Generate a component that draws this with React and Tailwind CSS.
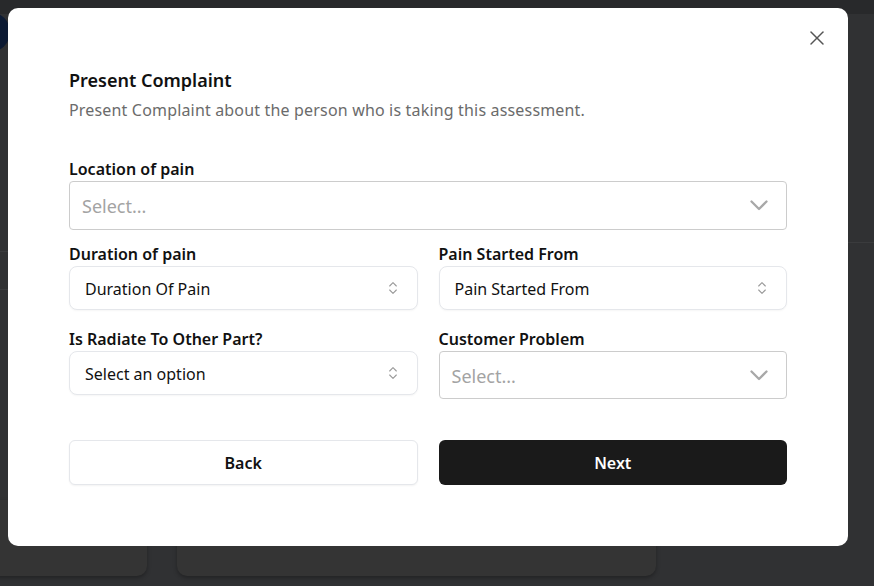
import React from "react";
import { X, ChevronsUpDown } from "lucide-react";

const font = { fontFamily: '"Noto Sans", "Open Sans", sans-serif' };

function Chevron() {
  return (
    <svg viewBox="0 0 18 11" width="18" height="11" fill="none">
      <polyline points="1.5,1.5 9,9 16.5,1.5" stroke="#a8a8a8" strokeWidth="2.3" strokeLinecap="round" strokeLinejoin="round" />
    </svg>
  );
}

function ReactSelect({ h }) {
  return (
    <div className={`flex items-center justify-between rounded-[4px] border border-[#cccccc] bg-white pl-[12px] pr-[18px] ${h}`}>
      <span className="pt-[2px] text-[18px] text-[#a3a3a3]">Select...</span>
      <Chevron />
    </div>
  );
}

function NativeSelect({ value }) {
  return (
    <div className="flex h-[44px] items-center justify-between rounded-[8px] border border-[#e5e7eb] bg-white pl-[15px] pr-[16px] shadow-[0_1px_2px_rgba(0,0,0,0.04)]">
      <span className="pt-[2px] text-[16px] text-[#111111]">{value}</span>
      <ChevronsUpDown size={16} strokeWidth={1.6} className="text-[#999999]" />
    </div>
  );
}

function Label({ children }) {
  return <div className="h-[24px] text-[16px] font-semibold leading-[24px] text-[#111111]">{children}</div>;
}

export default function App() {
  return (
    <div className="relative h-[586px] w-[874px] overflow-hidden bg-[#303133]" style={font}>
      {/* background page behind overlay */}
      <div className="absolute left-0 top-0 h-[14px] w-full bg-[#28292b]" />
      <div className="absolute left-[-34px] top-[12px] h-[40px] w-[44px] rounded-full bg-[#0c1a33]" />
      <div className="absolute left-0 top-[251px] h-px w-[10px] bg-[#3a3b3d]" />
      <div className="absolute left-0 top-[289px] h-px w-[10px] bg-[#3a3b3d]" />
      <div className="absolute right-0 top-[242px] h-px w-[30px] bg-[#3a3b3d]" />
      <div className="absolute left-[-10px] top-[500px] h-[76px] w-[157px] rounded-[10px] bg-[#343434] shadow-[0_2px_4px_rgba(0,0,0,0.3)]" />
      <div className="absolute left-[177px] top-[500px] h-[76px] w-[479px] rounded-[10px] bg-[#343434] shadow-[0_2px_4px_rgba(0,0,0,0.3)]" />

      {/* dialog */}
      <div className="absolute left-[8px] top-[8px] h-[538px] w-[840px] rounded-[10px] bg-white px-[61px] pt-[58px]">
        <button className="absolute left-[797px] top-[18px] block text-[#555555]">
          <X size={24} strokeWidth={1.5} />
        </button>

        <div className="text-[18px] font-semibold leading-[28px] text-[#111111]">Present Complaint</div>
        <div className="mt-[4px] text-[16px] leading-[24px] tracking-[0.17px] text-[#6b6b6b]">
          Present Complaint about the person who is taking this assessment.
        </div>

        <div className="mt-[35px]">
          <Label>Location of pain</Label>
          <ReactSelect h="h-[49px]" />
        </div>

        <div className="mt-[12px] grid grid-cols-2 gap-x-[21px]">
          <div>
            <Label>Duration of pain</Label>
            <NativeSelect value="Duration Of Pain" />
          </div>
          <div>
            <Label>Pain Started From</Label>
            <NativeSelect value="Pain Started From" />
          </div>
        </div>

        <div className="mt-[17px] grid grid-cols-2 items-start gap-x-[21px]">
          <div>
            <Label>Is Radiate To Other Part?</Label>
            <NativeSelect value="Select an option" />
          </div>
          <div>
            <Label>Customer Problem</Label>
            <ReactSelect h="h-[48px]" />
          </div>
        </div>

        <div className="mt-[41px] grid grid-cols-2 gap-x-[21px]">
          <button className="h-[45px] rounded-[6px] border border-[#e5e7eb] bg-white text-[16px] font-semibold text-[#111111] shadow-[0_1px_2px_rgba(0,0,0,0.05)]">
            Back
          </button>
          <button className="h-[45px] rounded-[6px] bg-[#1a1a1a] text-[16px] font-semibold text-white">
            Next
          </button>
        </div>
      </div>
    </div>
  );
}
